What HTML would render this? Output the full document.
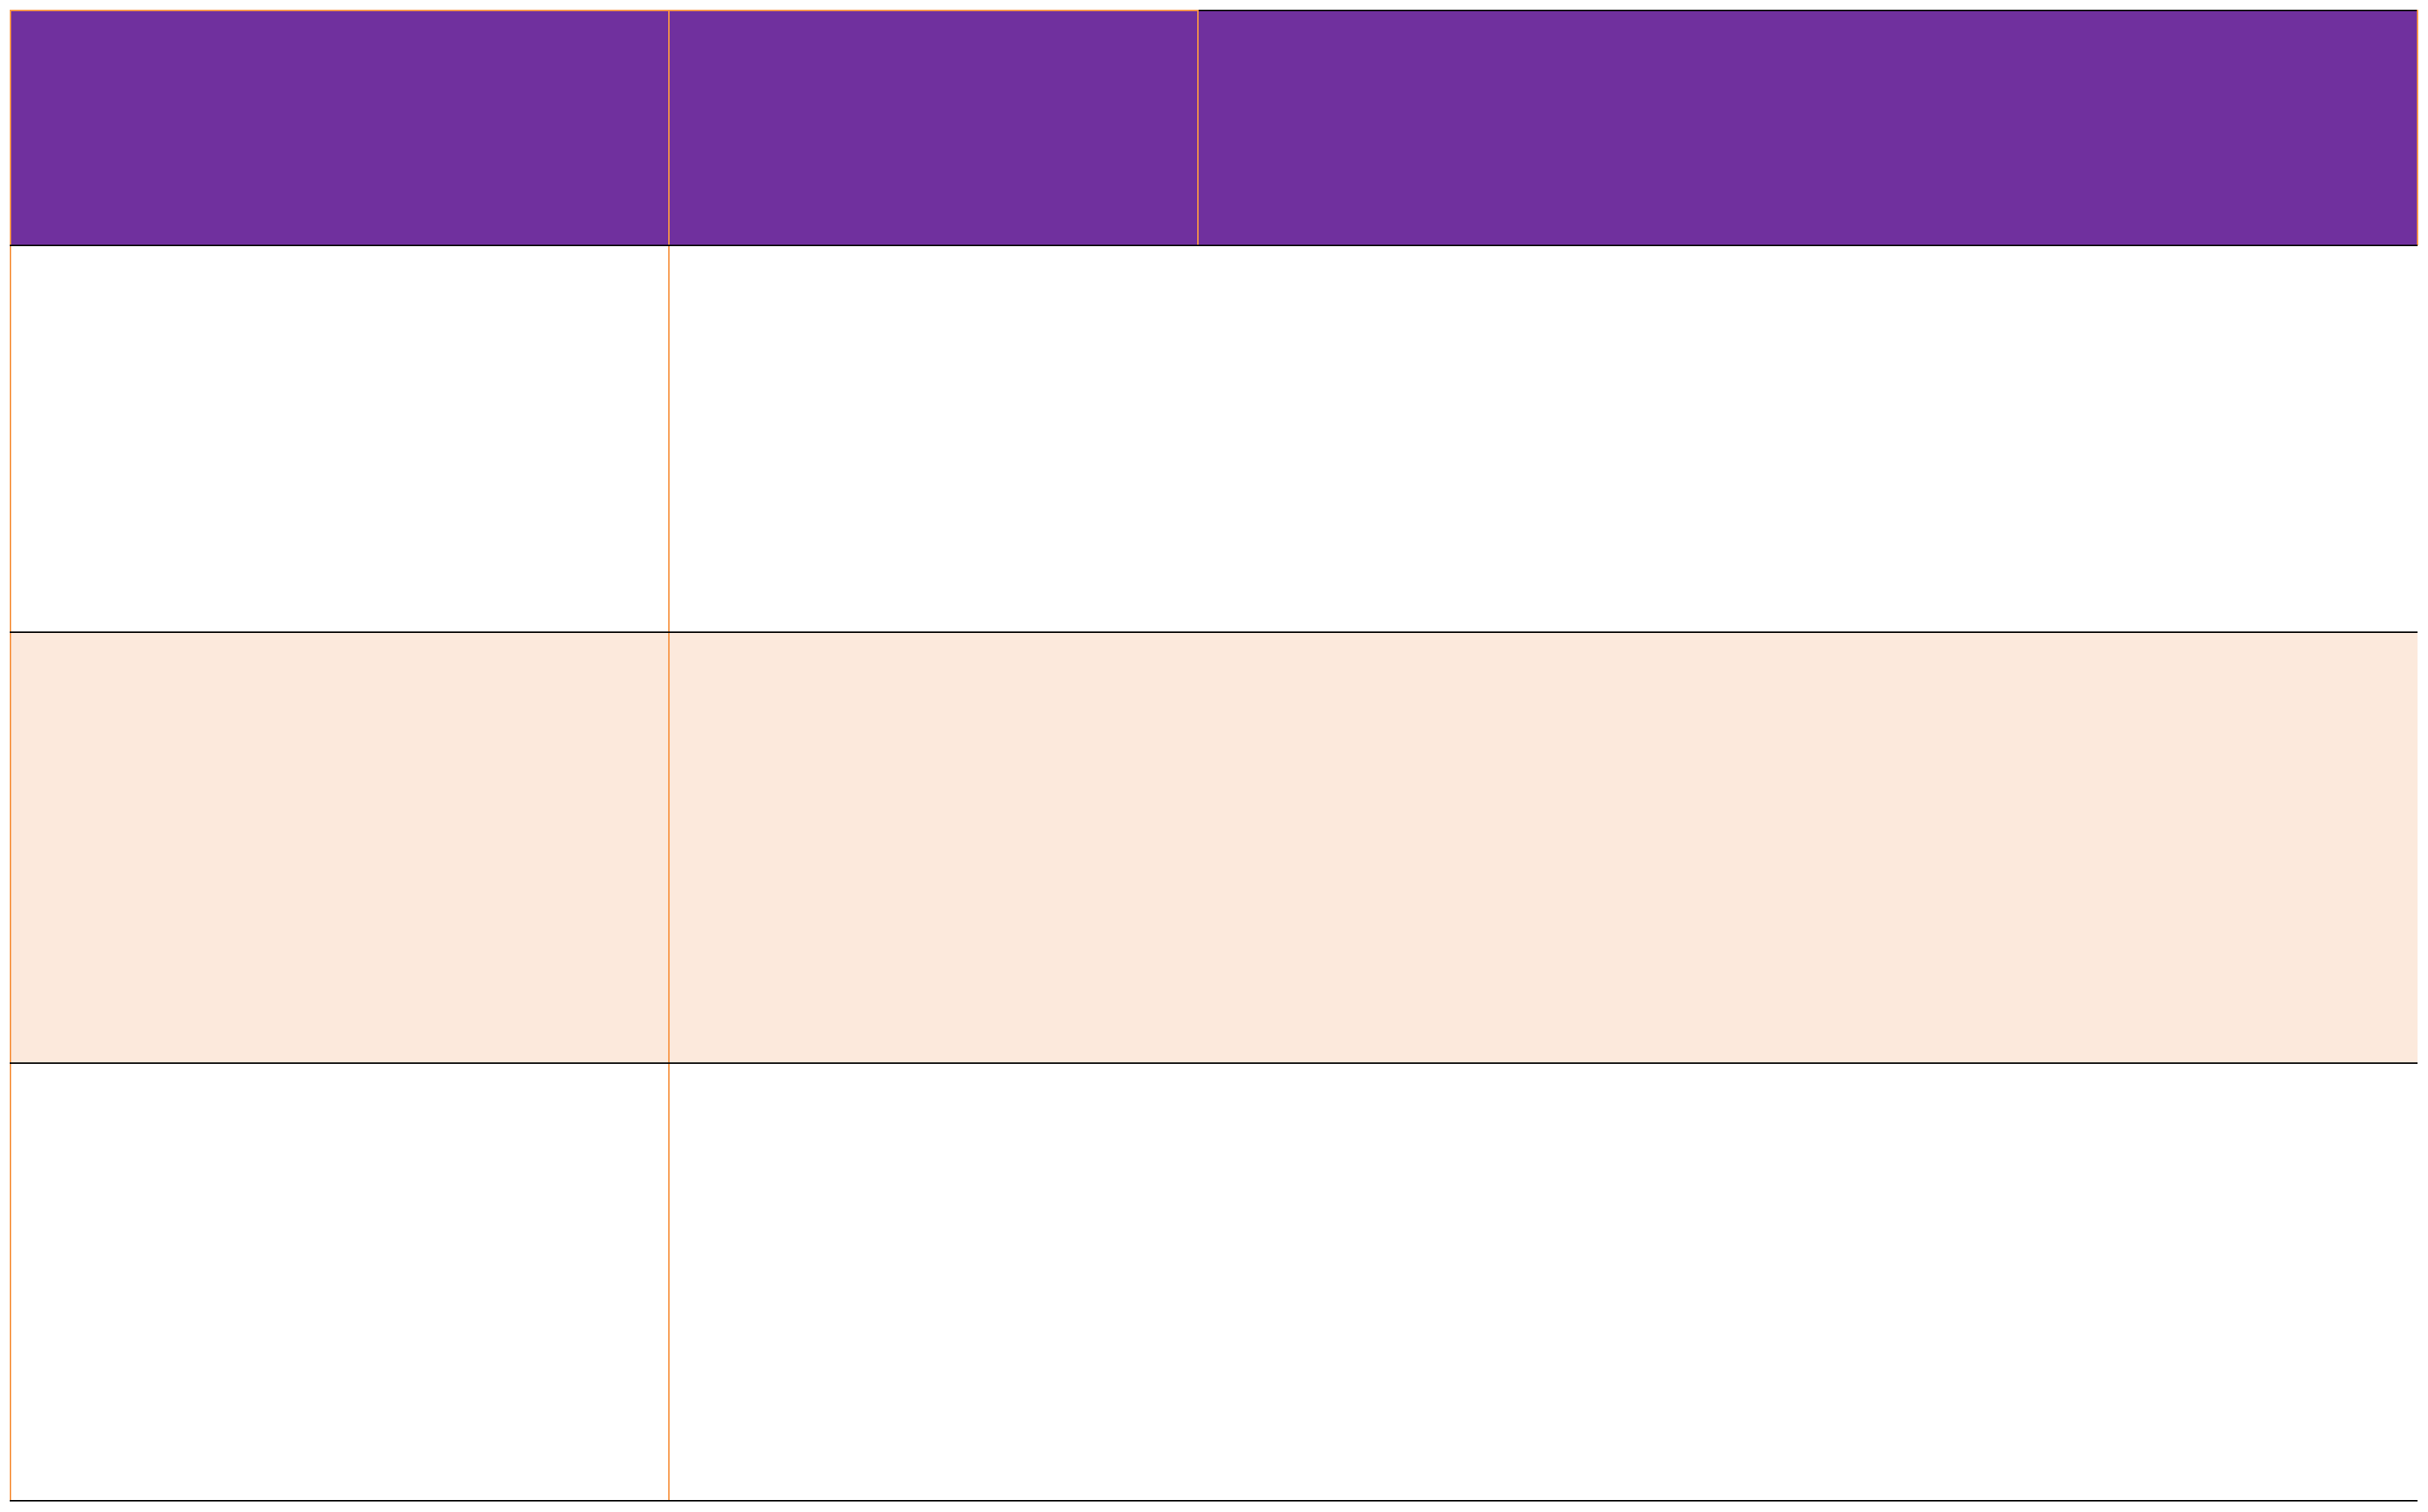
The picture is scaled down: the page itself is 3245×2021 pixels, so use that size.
<!DOCTYPE html>
<html><head><style>
html,body{margin:0;padding:0;width:3245px;height:2021px;background:#fff;overflow:hidden;position:relative}
div{position:absolute}
</style></head><body>
<div style="left:13px;top:15px;width:3218px;height:313px;background:#70309e"></div>
<div style="left:15px;top:845px;width:3216px;height:575px;background:#fce9dc"></div>
<div style="left:13px;top:13px;width:1588px;height:2px;background:#f79646"></div>
<div style="left:1601px;top:13px;width:1630px;height:2px;background:#000"></div>
<div style="left:13px;top:13px;width:2px;height:1994px;background:#f79646"></div>
<div style="left:893px;top:13px;width:2px;height:1994px;background:#f79646"></div>
<div style="left:1600px;top:13px;width:2px;height:315px;background:#f79646"></div>
<div style="left:3230px;top:13px;width:2px;height:315px;background:#f79646"></div>
<div style="left:13px;top:327px;width:3218px;height:2px;background:#000"></div>
<div style="left:13px;top:844px;width:3218px;height:2px;background:#000"></div>
<div style="left:13px;top:1420px;width:3218px;height:2px;background:#000"></div>
<div style="left:13px;top:2005px;width:3218px;height:2px;background:#000"></div>
</body></html>
